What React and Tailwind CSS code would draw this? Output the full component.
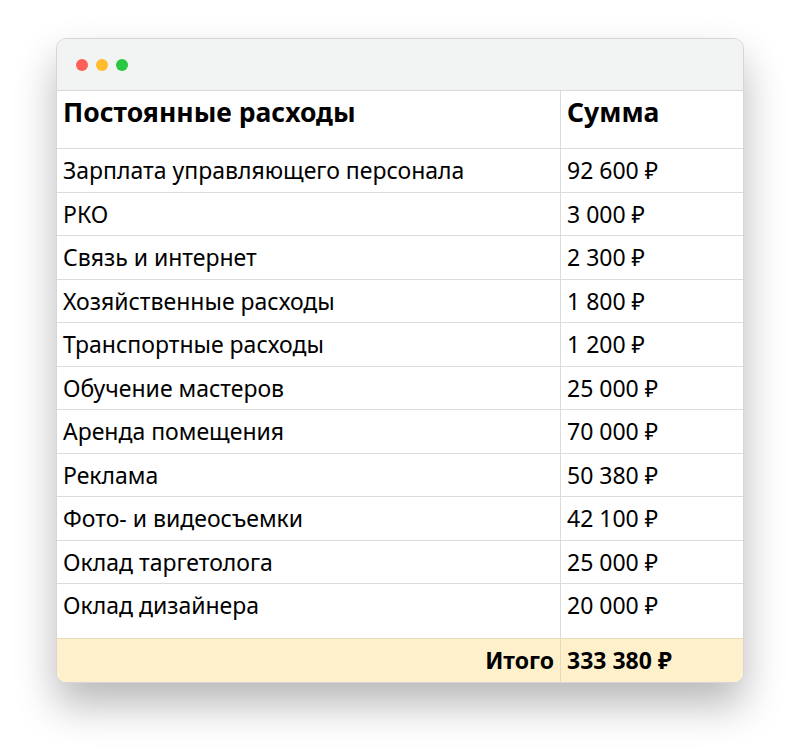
const rows = [
  ['Зарплата управляющего персонала', '92 600 ₽'],
  ['РКО', '3 000 ₽'],
  ['Связь и интернет', '2 300 ₽'],
  ['Хозяйственные расходы', '1 800 ₽'],
  ['Транспортные расходы', '1 200 ₽'],
  ['Обучение мастеров', '25 000 ₽'],
  ['Аренда помещения', '70 000 ₽'],
  ['Реклама', '50 380 ₽'],
  ['Фото- и видеосъемки', '42 100 ₽'],
  ['Оклад таргетолога', '25 000 ₽'],
  ['Оклад дизайнера', '20 000 ₽'],
]

export default function App() {
  return (
    <div className="w-[800px] h-[756px] bg-white pt-[38px] pl-[56px] font-['Noto_Sans',sans-serif] text-black">
      <div className="w-[688px] rounded-[10px] border border-[#d6d6d6] bg-white overflow-hidden shadow-[0_22px_40px_rgba(0,0,0,0.28)]">
        <div className="h-[52px] bg-[#f2f3f3] border-b border-[#d9d9d9] flex items-center gap-[8px] pl-[19px]">
          <span className="w-[12px] h-[12px] rounded-full bg-[#fe5f57]" />
          <span className="w-[12px] h-[12px] rounded-full bg-[#febc2e]" />
          <span className="w-[12px] h-[12px] rounded-full bg-[#28c840]" />
        </div>
        <div className="grid grid-cols-[504px_1fr]">
          <div className="h-[58px] pl-[6px] pt-[2px] text-[26.5px] font-bold border-b border-r border-[#dcdcdc]">Постоянные расходы</div>
          <div className="h-[58px] pl-[6px] pt-[2px] text-[26.5px] font-bold border-b border-[#dcdcdc]">Сумма</div>
          {rows.map(([name, sum], i) => {
            const last = i === rows.length - 1
            return [
              <div key={name} className={`${last ? 'h-[54px] items-start pt-[4px]' : 'h-[43.5px] items-center border-b'} flex pl-[6px] text-[23px] border-r border-[#dcdcdc]`}>{name}</div>,
              <div key={name + 's'} className={`${last ? 'h-[54px] items-start pt-[4px]' : 'h-[43.5px] items-center border-b'} flex pl-[6px] text-[23px] border-[#dcdcdc]`}>{sum}</div>,
            ]
          })}
          <div className="h-[44px] flex items-center justify-end pr-[6px] text-[23px] font-bold bg-[#fff0cc] border-t border-r border-[#e8dcb8]">Итого</div>
          <div className="h-[44px] flex items-center pl-[6px] text-[23px] font-bold bg-[#fff0cc] border-t border-[#e8dcb8]">333 380 ₽</div>
        </div>
      </div>
    </div>
  )
}
